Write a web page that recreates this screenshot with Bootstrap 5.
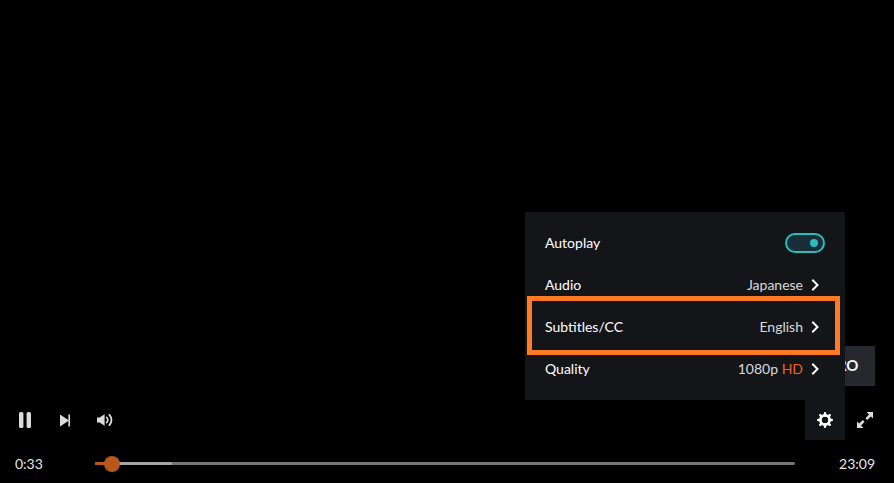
<!DOCTYPE html>
<html lang="en">
<head>
<meta charset="utf-8">
<title>Player</title>
<link href="https://cdn.jsdelivr.net/npm/bootstrap@5.3.0/dist/css/bootstrap.min.css" rel="stylesheet">
<style>
html, body { height: 100%; background: #000; overflow: hidden; }
body { font-family: Lato, "Liberation Sans", sans-serif; font-size: 14px; color: #fff; }
.stage { height: 483px; width: 894px; background: #000; }
.ctl-row { height: 40px; padding: 0 9px 0 5px; }
.ctl-btn { width: 40px; height: 40px; background: transparent; border: 0; padding: 0; }
.ctl-btn svg { display: block; }
.ctl-on { background: #141519; }
.seek-row { height: 43px; padding: 4px 19px 0 15px; color: #e6e6e6; }
.time-l { width: 80px; }
.time-r { width: 80px; text-align: right; }
.seek { height: 3px; background: #757575; border-radius: 2px; }
.seek-buf { width: 77px; height: 3px; background: #a6a6a6; border-radius: 2px; }
.seek-played { left: 0; top: 0; width: 17px; height: 3px; background: #b8591b; }
.seek-thumb { left: 9px; top: -6.5px; width: 16px; height: 16px; border-radius: 50%; background: #b8591b; }
.skip-tile { right: 19px; top: 346px; height: 40px; width: 110px; background: #27282d; font-weight: 700; font-size: 15px; color: #f5f5f5; padding-right: 16.5px; padding-bottom: 1px; }
.menu-panel { right: 49px; top: 212px; width: 320px; padding: 10px 0; background: #141519; }
.menu-line { height: 42px; padding: 0 20px; }
.menu-txt { padding-bottom: 2px; }
.menu-val { color: #dadada; padding-bottom: 2px; }
.menu-hd { color: #f0641f; }
.menu-line svg { margin-left: 8px; margin-right: 6px; display: block; }
.auto-toggle { width: 40px; height: 20px; border: 2px solid #2abdbb; border-radius: 10px; background: #192e38; padding-right: 5px; }
.auto-dot { width: 8px; height: 8px; border-radius: 50%; background: #2abdbb; }
.hi-box { left: 2px; top: 84px; width: 313px; height: 59px; border: 5px solid #ff7a22; pointer-events: none; }
</style>
</head>
<body>
<main class="stage position-relative d-flex flex-column justify-content-end">
  <div class="skip-tile position-absolute d-flex align-items-center justify-content-end">INTRO</div>

  <div class="ctl-row d-flex align-items-center">
    <button class="ctl-btn d-flex align-items-center justify-content-center" aria-label="Pause">
      <svg width="14" height="16" viewBox="0 0 14 16"><rect x="1" y="0" width="4.4" height="16" rx="1.6" fill="#dcdcdc"/><rect x="8.6" y="0" width="4.4" height="16" rx="1.6" fill="#dcdcdc"/></svg>
    </button>
    <button class="ctl-btn d-flex align-items-center justify-content-center" aria-label="Next">
      <svg width="12" height="13" viewBox="0 0 12 13"><path d="M1 .5 10 6.5 1 12.5Z" fill="#dcdcdc"/><rect x="9.4" y=".5" width="1.6" height="12" fill="#dcdcdc"/></svg>
    </button>
    <button class="ctl-btn d-flex align-items-center justify-content-center" aria-label="Volume">
      <svg width="16" height="12" viewBox="0 0 16 12"><path d="M0 3.6H2.6L7.6 .2V11.8L2.6 8.4H0Z" fill="#dcdcdc"/><path d="M9.6 3.4a3.4 3.4 0 0 1 0 5.2" fill="none" stroke="#dcdcdc" stroke-width="1.7" stroke-linecap="round"/><path d="M12.4 .9a7.4 7.4 0 0 1 0 10.2" fill="none" stroke="#dcdcdc" stroke-width="1.8" stroke-linecap="round"/></svg>
    </button>
    <div class="flex-grow-1"></div>
    <button class="ctl-btn ctl-on d-flex align-items-center justify-content-center" aria-label="Settings">
      <svg width="16" height="16" viewBox="0 0 16 16"><circle cx="8" cy="8" r="4.6" fill="none" stroke="#fff" stroke-width="2.8"/><path d="M8 1.2V14.8M1.2 8H14.8M3.2 3.2 12.8 12.8M12.8 3.2 3.2 12.8" stroke="#fff" stroke-width="2.4" stroke-linecap="round" stroke-dasharray="2.4 8.8 2.4 20"/><circle cx="8" cy="8" r="3.1" fill="#141519"/></svg>
    </button>
    <button class="ctl-btn d-flex align-items-center justify-content-center" aria-label="Fullscreen">
      <svg width="16" height="16" viewBox="0 0 16 16"><path fill="#dcdcdc" d="M9.5 0H16V6.5L13.9 4.4 10.2 8 8.4 6.2 12 2.5ZM6.5 16H0V9.5L2.1 11.6 5.8 8 7.6 9.8 4 13.5Z"/></svg>
    </button>
  </div>

  <div class="seek-row d-flex align-items-center">
    <span class="time-l">0:33</span>
    <div class="seek flex-grow-1 position-relative">
      <div class="seek-buf"></div>
      <div class="seek-played position-absolute"></div>
      <div class="seek-thumb position-absolute"></div>
    </div>
    <span class="time-r">23:09</span>
  </div>

  <div class="menu-panel position-absolute">
    <div class="menu-line d-flex align-items-center justify-content-between">
      <span class="menu-txt">Autoplay</span>
      <span class="auto-toggle d-flex align-items-center justify-content-end"><span class="auto-dot"></span></span>
    </div>
    <div class="menu-line d-flex align-items-center">
      <span class="menu-txt me-auto">Audio</span><span class="menu-val">Japanese</span>
      <svg width="8" height="12" viewBox="0 0 8 12"><path d="M1.3 .8 6.5 6 1.3 11.2" fill="none" stroke="#fff" stroke-width="2"/></svg>
    </div>
    <div class="menu-line d-flex align-items-center">
      <span class="menu-txt me-auto">Subtitles/CC</span><span class="menu-val">English</span>
      <svg width="8" height="12" viewBox="0 0 8 12"><path d="M1.3 .8 6.5 6 1.3 11.2" fill="none" stroke="#fff" stroke-width="2"/></svg>
    </div>
    <div class="menu-line d-flex align-items-center">
      <span class="menu-txt me-auto">Quality</span><span class="menu-val">1080p <span class="menu-hd">HD</span></span>
      <svg width="8" height="12" viewBox="0 0 8 12"><path d="M1.3 .8 6.5 6 1.3 11.2" fill="none" stroke="#fff" stroke-width="2"/></svg>
    </div>
    <div class="hi-box position-absolute"></div>
  </div>
</main>
<script src="https://cdn.jsdelivr.net/npm/bootstrap@5.3.0/dist/js/bootstrap.bundle.min.js"></script>
</body>
</html>
